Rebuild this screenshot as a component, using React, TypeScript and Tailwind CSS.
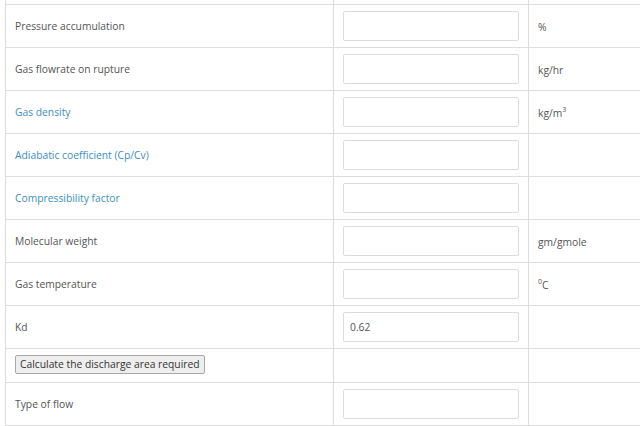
const rows: { label: string; blue?: boolean; unit?: React.ReactNode; value?: string }[] = [
  { label: 'Pressure accumulation', unit: '%' },
  { label: 'Gas flowrate on rupture', unit: 'kg/hr' },
  { label: 'Gas density', blue: true, unit: <>kg/m<sup className="text-[7px]">3</sup></> },
  { label: 'Adiabatic coefficient (Cp/Cv)', blue: true },
  { label: 'Compressibility factor', blue: true },
  { label: 'Molecular weight', unit: 'gm/gmole' },
  { label: 'Gas temperature', unit: <><sup className="text-[7px]">0</sup>C</> },
  { label: 'Kd', value: '0.62' },
];

const Input = ({ value }: { value?: string }) => (
  <input
    type="text"
    defaultValue={value}
    className="w-[176px] h-[30px] border border-[#dcdcdc] rounded-[2px] bg-white px-[6px] text-[10.3px] text-[#555] outline-none"
  />
);

const App = () => {
  return (
    <div className="w-[640px] h-[426px] overflow-hidden bg-white font-['Open_Sans',sans-serif] text-[10.3px] text-[#555]">
      <div className="ml-[5px] w-[650px]">
        {/* cut-off row above */}
        <div className="flex h-[5px] border-b border-[#dddddd]">
          <div className="w-[328px] border-l border-[#dddddd]" />
          <div className="w-[195px] border-l border-[#dddddd]" />
          <div className="flex-1 border-l border-[#dddddd]" />
        </div>

        {rows.map((r) => (
          <div key={r.label} className="flex h-[43px] border-b border-[#dddddd]">
            <div className={`w-[328px] border-l border-[#dddddd] pl-[9px] pt-[2px] flex items-center ${r.blue ? 'text-[#3b8fc2]' : ''}`}>
              {r.label}
            </div>
            <div className="w-[195px] border-l border-[#dddddd] pl-[9px] flex items-center">
              <Input value={r.value} />
            </div>
            <div className="flex-1 border-l border-[#dddddd] pl-[9px] pt-[3px] flex items-center">{r.unit}</div>
          </div>
        ))}

        <div className="flex h-[34px] border-b border-[#dddddd]">
          <div className="w-[328px] border-l border-[#dddddd] pl-[9px] pt-[6px]">
            <button className="h-[19px] px-[4px] bg-[#eeeeee] border border-[#a9a9a9] rounded-[2px] text-[10.3px] text-[#333] leading-none">
              Calculate the discharge area required
            </button>
          </div>
          <div className="w-[195px] border-l border-[#dddddd]" />
          <div className="flex-1 border-l border-[#dddddd]" />
        </div>

        <div className="flex h-[43px] border-b border-[#dddddd]">
          <div className="w-[328px] border-l border-[#dddddd] pl-[9px] pt-[2px] flex items-center">Type of flow</div>
          <div className="w-[195px] border-l border-[#dddddd] pl-[9px] flex items-center">
            <Input />
          </div>
          <div className="flex-1 border-l border-[#dddddd]" />
        </div>
      </div>
    </div>
  );
};

export default App;
